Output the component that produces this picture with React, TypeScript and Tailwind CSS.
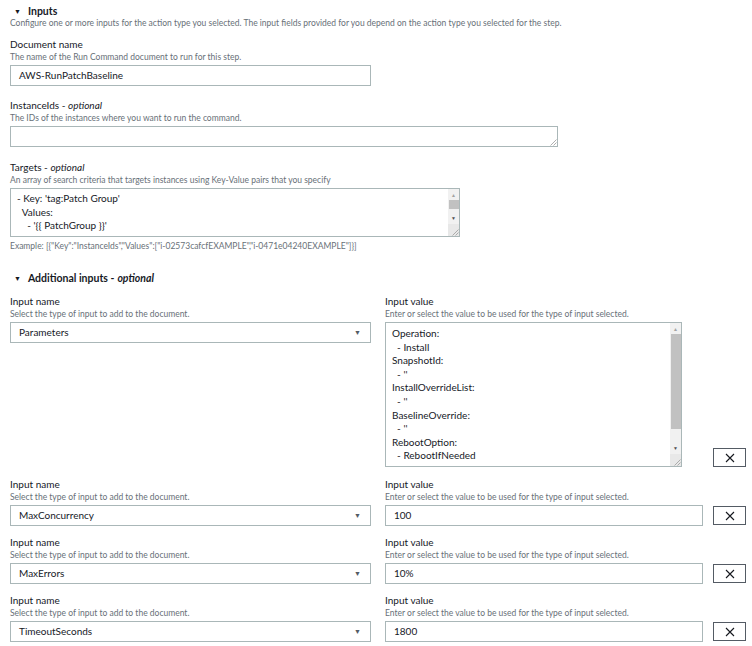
import React from "react"

const font = { fontFamily: 'Lato, "Open Sans", sans-serif' }

function Label({ name, optional, desc }: { name: string; optional?: boolean; desc: string }) {
  return (
    <div>
      <div className="text-[10px] leading-[13px] text-[#16191f]">
        {name}
        {optional && (
          <>
            {" - "}
            <i>optional</i>
          </>
        )}
      </div>
      <div className="text-[8.5px] leading-[12px] text-[#687078]">{desc}</div>
    </div>
  )
}

function Grip() {
  return (
    <svg width="8" height="8" viewBox="0 0 8 8">
      <path d="M7.5 1.5 L1.5 7.5 M7.5 4.5 L4.5 7.5" stroke="#9a9a9a" strokeWidth="0.8" />
    </svg>
  )
}

function ScrollBar({ thumb }: { thumb: string }) {
  return (
    <div className="flex w-[11px] flex-col items-center bg-[#f1f1f1]">
      <span className="mt-[3px] text-[5px] leading-[6px] text-[#a3a3a3]">▲</span>
      <div className={`mt-[2px] w-[10px] bg-[#c1c1c1] ${thumb}`} />
      <div className="flex-1" />
      <span className="text-[5px] leading-[6px] text-[#505050]">▼</span>
      <div className="mt-[3px] flex h-[12px] w-full items-end justify-end bg-[#e8e8e8]">
        <Grip />
      </div>
    </div>
  )
}

function Select({ value }: { value: string }) {
  return (
    <div className="flex h-[21px] w-[361px] items-center justify-between border border-[#aab7b8] pl-[8px] pr-[9px] text-[10px] text-[#16191f]">
      <span>{value}</span>
      <span className="text-[7px] text-[#545b64]">▼</span>
    </div>
  )
}

function CloseButton() {
  return (
    <button className="flex h-[19px] w-[33px] shrink-0 items-center justify-center border border-[#545b64] bg-white">
      <svg width="10" height="10" viewBox="0 0 10 10">
        <path d="M1 1 L9 9 M9 1 L1 9" stroke="#16191f" strokeWidth="1.1" />
      </svg>
    </button>
  )
}

const nameDesc = "Select the type of input to add to the document."
const valueDesc = "Enter or select the value to be used for the type of input selected."

function SimpleRow({ name, value, first }: { name: string; value: string; first?: boolean }) {
  return (
    <div className={`flex items-end ${first ? "mt-[11px]" : "mt-[10px]"}`}>
      <div className="w-[375px] shrink-0">
        <Label name="Input name" desc={nameDesc} />
        <div className="mt-[2px]">
          <Select value={name} />
        </div>
      </div>
      <div className="shrink-0">
        <Label name="Input value" desc={valueDesc} />
        <div className="mt-[2px] flex h-[21px] w-[318px] items-center border border-[#aab7b8] pl-[8px] text-[10px] text-[#16191f]">
          {value}
        </div>
      </div>
      <div className="mb-[1px] ml-[10px]">
        <CloseButton />
      </div>
    </div>
  )
}

const params = [
  "Operation:",
  "  - Install",
  "SnapshotId:",
  "  - ''",
  "InstallOverrideList:",
  "  - ''",
  "BaselineOverride:",
  "  - ''",
  "RebootOption:",
  "  - RebootIfNeeded",
]

export default function App() {
  return (
    <div className="min-h-screen bg-white pl-[10px] pt-[4px]" style={font}>
      <div className="flex items-center text-[10.5px] font-bold leading-[14px] text-[#16191f]">
        <span className="ml-[4px] mr-[7px] text-[7px]">▼</span>
        Inputs
      </div>
      <div className="text-[8.5px] leading-[10px] text-[#687078]">
        Configure one or more inputs for the action type you selected. The input fields provided for you depend on the action type you selected for the step.
      </div>

      <div className="mt-[10px]">
        <Label name="Document name" desc="The name of the Run Command document to run for this step." />
        <div className="mt-[2px] flex h-[21px] w-[361px] items-center border border-[#aab7b8] pl-[8px] text-[10px] text-[#16191f]">
          AWS-RunPatchBaseline
        </div>
      </div>

      <div className="mt-[13px]">
        <Label name="InstanceIds" optional desc="The IDs of the instances where you want to run the command." />
        <div className="mt-[2px] flex h-[21px] w-[548px] items-end justify-end border border-[#aab7b8]">
          <Grip />
        </div>
      </div>

      <div className="mt-[14px]">
        <Label name="Targets" optional desc="An array of search criteria that targets instances using Key-Value pairs that you specify" />
        <div className="mt-[2px] flex h-[49px] w-[450px] border border-[#aab7b8]">
          <div className="flex-1 whitespace-pre pl-[6px] pt-[3px] text-[10px] leading-[13.5px] text-[#16191f]">
            {"- Key: 'tag:Patch Group'\n  Values:\n    - '{{ PatchGroup }}'"}
          </div>
          <ScrollBar thumb="h-[9px]" />
        </div>
        <div className="mt-[4px] text-[8.5px] leading-[10px] text-[#687078]">
          {'Example: [{"Key":"InstanceIds","Values":["i-02573cafcfEXAMPLE","i-0471e04240EXAMPLE"]}]'}
        </div>
      </div>

      <div className="mt-[20px] flex items-center text-[10.5px] font-bold leading-[14px] text-[#16191f]">
        <span className="ml-[4px] mr-[7px] text-[7px]">▼</span>
        Additional inputs - <i className="ml-[3px]">optional</i>
      </div>

      <div className="mt-[10px] flex items-end">
        <div className="w-[375px] shrink-0 self-start">
          <Label name="Input name" desc={nameDesc} />
          <div className="mt-[2px]">
            <Select value="Parameters" />
          </div>
        </div>
        <div className="shrink-0">
          <Label name="Input value" desc={valueDesc} />
          <div className="mt-[2px] flex h-[145px] w-[297px] border border-[#aab7b8]">
            <div className="flex-1 overflow-hidden whitespace-pre pl-[6px] pt-[4px] text-[10px] leading-[13.6px] text-[#16191f]">
              {params.join("\n")}
            </div>
            <ScrollBar thumb="h-[95px]" />
          </div>
        </div>
        <div className="ml-[31px]">
          <CloseButton />
        </div>
      </div>

      <SimpleRow name="MaxConcurrency" value="100" first />
      <SimpleRow name="MaxErrors" value="10%" />
      <SimpleRow name="TimeoutSeconds" value="1800" />
    </div>
  )
}
